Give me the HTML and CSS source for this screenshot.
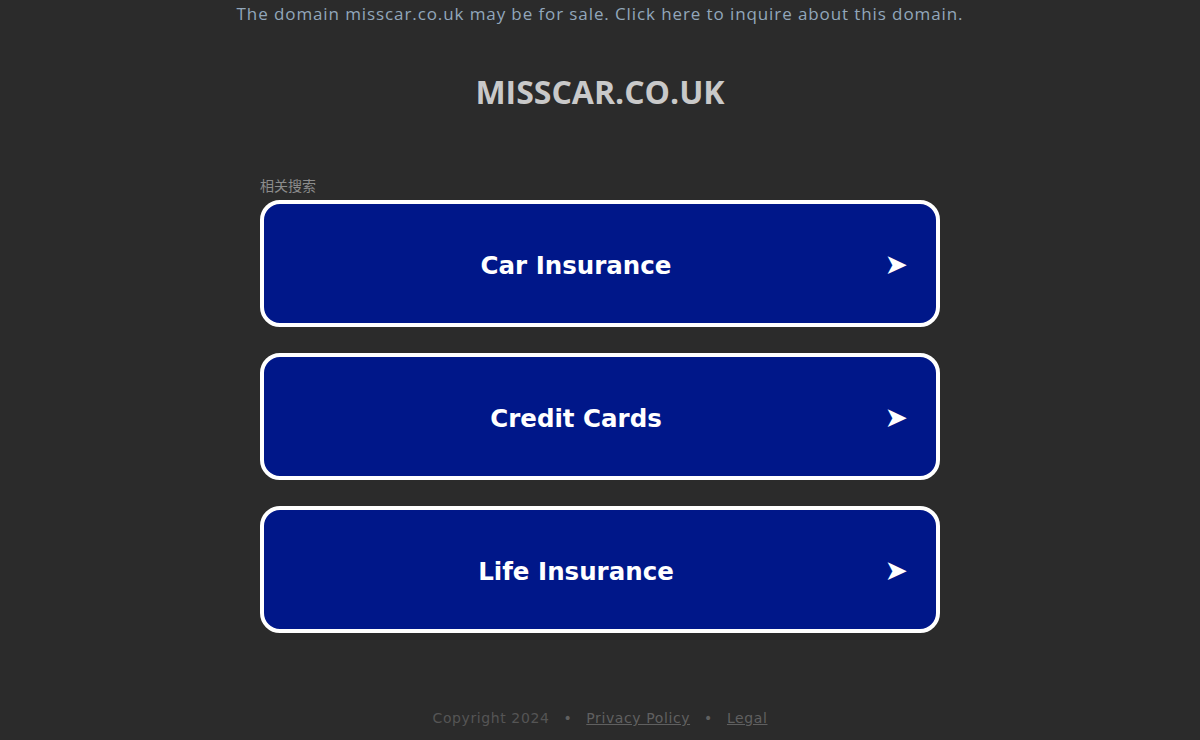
FILE: index.html
```html
<!DOCTYPE html>
<html lang="en">
<head>
    <meta charset="UTF-8">
    <title>misscar.co.uk</title>
    <link rel="stylesheet" href="styles.css">
</head>
<body>
    <div class="sale-banner">
        <a href="#">The domain misscar.co.uk may be for sale. Click here to inquire about this domain.</a>
    </div>

    <h1 class="domain">MISSCAR.CO.UK</h1>

    <!-- Related searches -->
    <div class="searches">
        <div class="searches-label">相关搜索</div>
        <a class="search-btn" href="#"><span>Car Insurance</span><span class="arrow">&#10148;</span></a>
        <a class="search-btn" href="#"><span>Credit Cards</span><span class="arrow">&#10148;</span></a>
        <a class="search-btn" href="#"><span>Life Insurance</span><span class="arrow">&#10148;</span></a>
    </div>

    <footer class="footer">
        <span>Copyright 2024</span>
        <span class="dot">&bull;</span>
        <a href="#">Privacy Policy</a>
        <span class="dot">&bull;</span>
        <a href="#">Legal</a>
    </footer>
</body>
</html>
```

FILE: styles.css
```css
body {
    margin: 0;
    background: #2b2b2b;
    font-family: "Open Sans", "Noto Sans", sans-serif;
    height: 740px;
    display: flex;
    flex-direction: column;
    align-items: center;
}

.sale-banner {
    height: 28px;
    line-height: 28px;
    font-size: 17px;
    letter-spacing: 0.9px;
}

.sale-banner a {
    color: #92a7bb;
    text-decoration: none;
}

.domain {
    margin: 46px 0 0;
    height: 36px;
    line-height: 36px;
    font-size: 32px;
    font-weight: bold;
    color: #c9c9c9;
}

/* Related searches */
.searches {
    width: 680px;
    margin-top: 62px;
}

.searches-label {
    font-family: "Noto Sans CJK SC", sans-serif;
    font-size: 14px;
    color: #8c8c8c;
    height: 28px;
    line-height: 26px;
}

.search-btn {
    display: flex;
    align-items: center;
    justify-content: center;
    position: relative;
    box-sizing: border-box;
    height: 127px;
    margin-bottom: 26px;
    padding: 3px 48px 0 0;
    background: #001789;
    border: 4px solid #fff;
    border-radius: 20px;
    color: #fff;
    text-decoration: none;
    font-family: "DejaVu Sans", Verdana, sans-serif;
    font-weight: bold;
    font-size: 24.5px;
}

.search-btn .arrow {
    position: absolute;
    right: 28px;
    top: 50%;
    transform: translateY(-50%);
    font-size: 28px;
    font-weight: normal;
}

.footer {
    margin-top: auto;
    height: 30px;
    font-family: "DejaVu Sans", sans-serif;
    font-size: 14px;
    letter-spacing: 0.6px;
    color: #555;
    display: flex;
    gap: 14px;
    align-items: flex-start;
}

.footer a {
    color: #606060;
}

.footer .dot {
    color: #606060;
}
```
